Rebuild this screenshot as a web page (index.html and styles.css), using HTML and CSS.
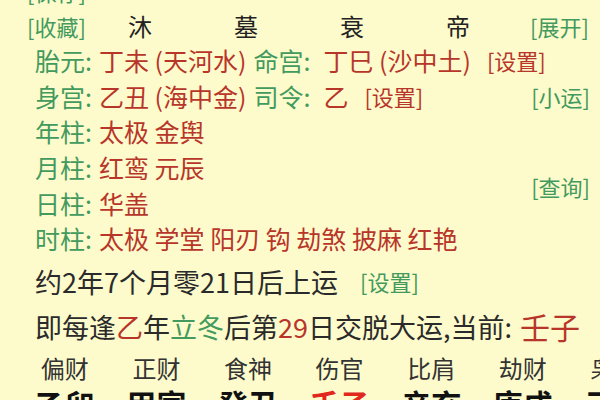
FILE: index.html
```html
<!DOCTYPE html>
<html>
	<head>
		<meta charset="utf-8">
		<link rel="stylesheet" href="styles.css">
	</head>
	<body>
		<div class="panel">
			<div class="line cut"><span class="tag g">[保存]</span></div>
			<div class="line top">
				<span class="tag g">[收藏]</span>
				<span class="stage">沐</span>
				<span class="stage">墓</span>
				<span class="stage">衰</span>
				<span class="stage last">帝</span>
				<span class="tag g">[展开]</span>
			</div>

			<div class="line info">
				<span class="g">胎元:</span>
				<span class="r">丁未 (天河水)</span>
				<span class="g wide">命宫:</span>
				<span class="r">丁巳 (沙中土)</span>
				<span class="tag r set">[设置]</span>
			</div>
			<div class="line info">
				<span class="g">身宫:</span>
				<span class="r">乙丑 (海中金)</span>
				<span class="g wide">司令:</span>
				<span class="r">乙</span>
				<span class="tag r set">[设置]</span>
				<span class="tag g side">[小运]</span>
			</div>
			<div class="line info">
				<span class="g">年柱:</span>
				<span class="r">太极 金舆</span>
			</div>
			<div class="line info">
				<span class="g">月柱:</span>
				<span class="r">红鸾 元辰</span>
			</div>
			<div class="line info">
				<span class="g">日柱:</span>
				<span class="r">华盖</span>
				<span class="tag g side up">[查询]</span>
			</div>
			<div class="line info">
				<span class="g">时柱:</span>
				<span class="r">太极 学堂 阳刃 钩 劫煞 披麻 红艳</span>
			</div>

			<div class="line luck">
				<span class="k">约2年7个月零21日后上运</span>
				<span class="tag g">[设置]</span>
			</div>
			<div class="line start">
				<span class="k">即每逢</span><span class="r">乙</span><span class="k">年</span><span class="g">立冬</span><span class="k">后第</span><span class="r">29</span><span class="k">日交脱大运,当前:</span>
				<span class="r now">壬子</span>
			</div>

			<div class="grid gods">
				<span>偏财</span>
				<span>正财</span>
				<span>食神</span>
				<span>伤官</span>
				<span>比肩</span>
				<span>劫财</span>
				<span>枭神</span>
			</div>
			<div class="grid pillars">
				<span>乙卯</span>
				<span>甲寅</span>
				<span>癸丑</span>
				<span class="hot">壬子</span>
				<span>辛亥</span>
				<span>庚戌</span>
				<span>己酉</span>
			</div>
		</div>
	</body>
</html>
```

FILE: styles.css
```css
body {
	margin: 0;
	width: 600px;
	height: 400px;
	overflow: hidden;
	background: #fdfbcc;
	font-family: "Noto Sans CJK SC", "Noto Sans", sans-serif;
	color: #2a2a2a;
}
.panel {
	padding: 0 10px 0 27px;
}
.line {
	display: flex;
	align-items: center;
	white-space: nowrap;
}
.g {
	color: #439a5e;
}
.r {
	color: #b8352a;
}
.k {
	color: #2a2a2a;
}
.tag {
	font-size: 22px;
}
.cut {
	height: 36px;
	margin-top: -27px;
}
.top {
	height: 33px;
}
.top .tag:first-child {
	width: 101px;
}
.stage {
	width: 106px;
	font-size: 24px;
	color: #222;
}
.stage.last {
	width: 84px;
}
.info {
	height: 35.7px;
	padding-left: 8px;
	font-size: 25px;
	gap: 7px;
}
.info .wide {
	margin-right: 6px;
}
.info .set {
	margin-left: 9px;
}
.side {
	margin-left: auto;
}
.up {
	position: relative;
	top: -17px;
}
.luck {
	height: 50px;
	padding-left: 8px;
	font-size: 27px;
	gap: 22px;
}
.start {
	height: 40px;
	padding-left: 8px;
	font-size: 27px;
}
.now {
	font-size: 30px;
	margin-left: 8px;
}
.grid {
	display: flex;
	margin-left: -8px;
	white-space: nowrap;
}
.grid span {
	flex: 0 0 91.6px;
	text-align: center;
}
.gods {
	height: 42px;
	align-items: center;
	font-size: 24px;
	color: #333;
}
.pillars {
	height: 30px;
	align-items: center;
	font-size: 30px;
	font-weight: bold;
	color: #111;
}
.pillars .hot {
	color: #e0281c;
}
```
